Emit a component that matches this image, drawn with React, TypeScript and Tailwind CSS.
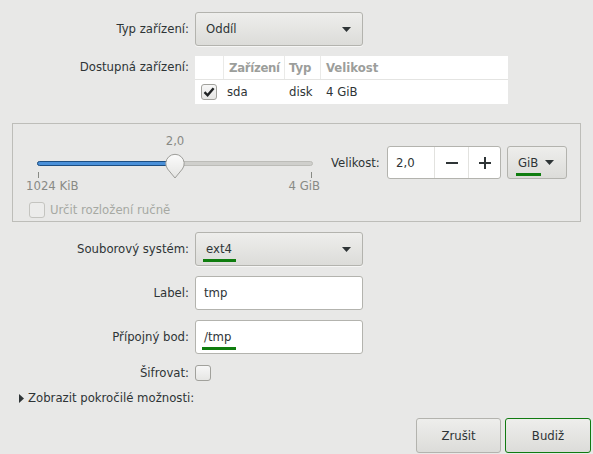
import React from 'react';

const FONT = "font-['DejaVu_Sans_Condensed','DejaVu_Sans',sans-serif] font-stretch-condensed";

// ─── Small widgets ────────────────────────────────────────────────────────
function DownArrow() {
    return (
        <svg width="9" height="5" viewBox="0 0 9 5" className="shrink-0">
            <path d="M0 0 H9 L4.5 5 Z" fill="#2e3436" />
        </svg>
    );
}

function Check({ checked = false, disabled = false }: { checked?: boolean; disabled?: boolean }) {
    return (
        <div
            className={`w-[16px] h-[16px] rounded-[3px] border flex items-center justify-center ${
                disabled
                    ? 'border-[#c4c4c0] bg-[#ececeb]'
                    : 'border-[#a1a19c] bg-gradient-to-b from-[#f7f7f7] to-[#e6e6e4]'
            }`}
        >
            {checked && (
                <svg width="12" height="12" viewBox="0 0 12 12">
                    <path d="M1.5 6.2 L4.6 9.3 L10.6 2.2" stroke="#1f2223" strokeWidth="2.4" fill="none" strokeLinejoin="miter" />
                </svg>
            )}
        </div>
    );
}

function Combo({ value, underline }: { value: string; underline?: boolean }) {
    return (
        <div className="w-[168px] h-[34px] rounded-[3px] border border-[#b3b3ae] bg-gradient-to-b from-[#eeeeec] to-[#dcdcd9] flex items-center pl-[10px] pr-[11px] shadow-[0_1px_0_rgba(255,255,255,0.6)]">
            <span className="relative flex-1">
                {value}
                {underline && <span className="absolute left-[-3px] top-[18px] w-[33px] h-[3px] bg-[#0f7d0f]" />}
            </span>
            <DownArrow />
        </div>
    );
}

function Entry({ value, underline }: { value: string; underline?: boolean }) {
    return (
        <div className="w-[168px] h-[34px] rounded-[3px] border border-[#b3b3ae] bg-white flex items-center pl-[8px]">
            <span className="relative">
                {value}
                {underline && <span className="absolute left-[-2px] top-[18px] w-[34px] h-[3px] bg-[#0f7d0f]" />}
            </span>
        </div>
    );
}

function Row({ label, children, className = '' }: { label: string; children: React.ReactNode; className?: string }) {
    return (
        <div className={`flex items-center ${className}`}>
            <div className="w-[190px] pr-[1px] text-right">{label}</div>
            <div className="ml-[5px]">{children}</div>
        </div>
    );
}

// ─── Size frame with slider ───────────────────────────────────────────────
function SizeFrame() {
    return (
        <div className="mt-[19px] ml-[12px] w-[569px] h-[99px] border border-[#bdbdb9] flex">
            <div className="flex flex-col pl-[12px]">
                <div className="relative w-[300px] h-[72px] mt-[6px] text-[#888a85]">
                    <span className="absolute left-[138px] top-[3px] w-[24px] text-center">2,0</span>
                    {/* track */}
                    <div className="absolute left-[12px] top-[31px] w-[276px] h-[5px] rounded-full bg-[#cfcfcc] border border-[#bcbcb8]" />
                    <div className="absolute left-[12px] top-[31px] w-[140px] h-[5px] rounded-l-full bg-[#4a90d9] border border-[#1c4e82]" />
                    {/* knob */}
                    <svg className="absolute left-[139px] top-[21px]" width="22" height="28" viewBox="0 0 22 28">
                        <defs>
                            <linearGradient id="kn" x1="0" y1="0" x2="0" y2="1">
                                <stop offset="0" stopColor="#fbfbfb" />
                                <stop offset="1" stopColor="#e4e4e2" />
                            </linearGradient>
                        </defs>
                        <path d="M11 27 L3.6 18 A9.2 9.2 0 1 1 18.4 18 Z" fill="url(#kn)" stroke="#9d9d99" strokeWidth="1" />
                    </svg>
                    {/* marks */}
                    <div className="absolute left-[13px] top-[42px] w-[1px] h-[6px] bg-[#888a85]" />
                    <div className="absolute left-[286px] top-[42px] w-[1px] h-[6px] bg-[#888a85]" />
                    <span className="absolute left-[1px] top-[48px]">1024 KiB</span>
                    <span className="absolute right-[5px] top-[48px]">4 GiB</span>
                </div>
                <div className="flex items-center ml-[4px] text-[#a6a8a3]">
                    <Check disabled />
                    <span className="ml-[5px]">Určit rozložení ručně</span>
                </div>
            </div>
            <div className="flex items-center self-start mt-[22px] ml-[6px]">
                <span className="w-[50px]">Velikost:</span>
                <div className="ml-[6px] w-[114px] h-[33px] rounded-[3px] border border-[#b3b3ae] bg-white flex">
                    <div className="w-[46px] flex items-center pl-[8px]">2,0</div>
                    <div className="w-[34px] border-l border-[#e2e2df] flex items-center justify-center">
                        <svg width="12" height="2" viewBox="0 0 12 2"><rect width="12" height="2" fill="#2e3436" /></svg>
                    </div>
                    <div className="flex-1 border-l border-[#e2e2df] flex items-center justify-center">
                        <svg width="12" height="12" viewBox="0 0 12 12"><path d="M5 0h2v12H5z M0 5h12v2H0z" fill="#2e3436" /></svg>
                    </div>
                </div>
                <div className="ml-[6px] w-[60px] h-[33px] rounded-[3px] border border-[#b3b3ae] bg-gradient-to-b from-[#eeeeec] to-[#dcdcd9] flex items-center pl-[10px] gap-[7px]">
                    <span className="relative">
                        GiB
                        <span className="absolute left-[-2px] top-[18px] w-[25px] h-[3px] bg-[#0f7d0f]" />
                    </span>
                    <DownArrow />
                </div>
            </div>
        </div>
    );
}

export default function App() {
    return (
        <div className={`w-[593px] h-[454px] bg-[#e8e8e7] text-[13px] leading-[16px] text-[#2e3436] overflow-hidden ${FONT}`}>
            <Row label="Typ zařízení:" className="pt-[12px]">
                <Combo value="Oddíl" />
            </Row>

            {/* Device table */}
            <div className="flex mt-[10px]">
                <div className="w-[190px] pr-[1px] text-right pt-[3px]">Dostupná zařízení:</div>
                <div className="ml-[5px] w-[313px] h-[48px] bg-white flex flex-col">
                    <div className="h-[24px] flex border-b border-[#e4e4e2] font-bold text-[#9c9e9b]">
                        <div className="w-[29px] border-r border-[#eaeae8]" />
                        <div className="w-[61px] border-r border-[#eaeae8] pl-[5px] flex items-center whitespace-nowrap tracking-[-0.3px]">Zařízení</div>
                        <div className="w-[36px] border-r border-[#eaeae8] pl-[4px] flex items-center">Typ</div>
                        <div className="flex-1 pl-[5px] flex items-center">Velikost</div>
                    </div>
                    <div className="h-[23px] flex items-center">
                        <div className="w-[29px] pl-[6px]"><Check checked /></div>
                        <div className="w-[61px] pl-[3px]">sda</div>
                        <div className="w-[36px] pl-[4px]">disk</div>
                        <div className="flex-1 pl-[5px]">4 GiB</div>
                    </div>
                </div>
            </div>

            <SizeFrame />

            <Row label="Souborový systém:" className="mt-[10px]">
                <Combo value="ext4" underline />
            </Row>
            <Row label="Label:" className="mt-[10px]">
                <Entry value="tmp" />
            </Row>
            <Row label="Přípojný bod:" className="mt-[10px]">
                <Entry value="/tmp" underline />
            </Row>
            <Row label="Šifrovat:" className="mt-[11px]">
                <Check />
            </Row>

            <div className="flex items-center mt-[9px] pl-[19px]">
                <svg width="5" height="9" viewBox="0 0 5 9"><path d="M0 0 L5 4.5 L0 9 Z" fill="#2e3436" /></svg>
                <span className="ml-[4px]">Zobrazit pokročilé možnosti:</span>
            </div>

            <div className="flex justify-end gap-[4px] pr-[2px] mt-[12px]">
                <div className="w-[85px] h-[35px] rounded-[3px] border border-[#b3b3ae] bg-gradient-to-b from-[#eeeeec] to-[#dcdcd9] flex items-center justify-center">Zrušit</div>
                <div className="w-[86px] h-[35px] rounded-[3px] border border-[#117a11] bg-gradient-to-b from-[#eeeeec] to-[#dcdcd9] flex items-center justify-center">Budiž</div>
            </div>
        </div>
    );
}
